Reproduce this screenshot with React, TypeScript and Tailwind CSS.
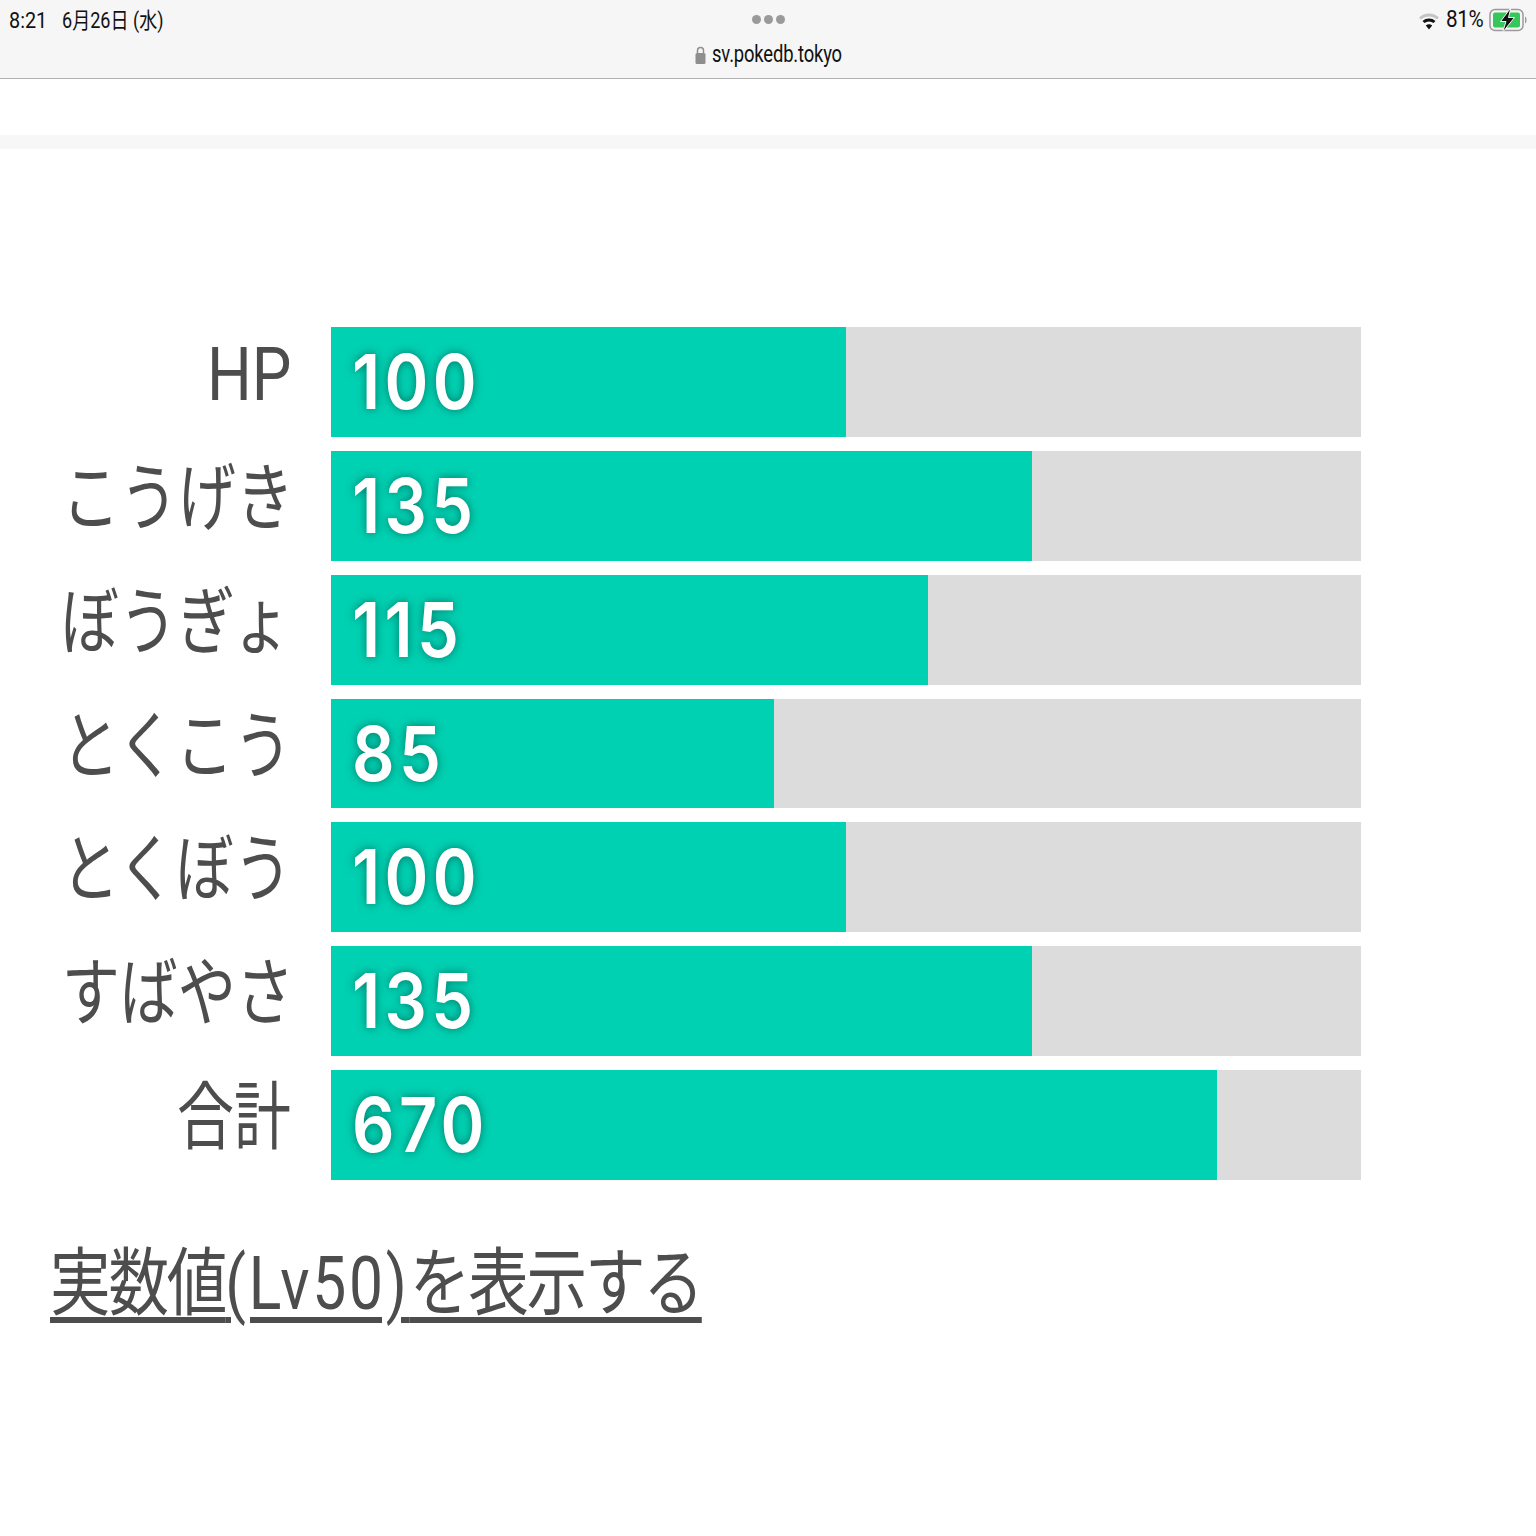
import React from 'react';

const stats = [
  { label: 'HP', value: 100, width: 515, squeeze: 'scale-x-[0.85]' },
  { label: 'こうげき', value: 135, width: 701, squeeze: 'scale-x-[0.785] -translate-x-[2px]' },
  { label: 'ぼうぎょ', value: 115, width: 597, squeeze: 'scale-x-[0.785] -translate-x-[2px]' },
  { label: 'とくこう', value: 85, width: 443, squeeze: 'scale-x-[0.785] -translate-x-[2px]' },
  { label: 'とくぼう', value: 100, width: 515, squeeze: 'scale-x-[0.785] -translate-x-[2px]' },
  { label: 'すばやさ', value: 135, width: 701, squeeze: 'scale-x-[0.785] -translate-x-[2px]' },
  { label: '合計', value: 670, width: 886, squeeze: 'scale-x-[0.77]' },
];

function Wifi() {
  return (
    <svg width="20" height="18" viewBox="0 0 20 18" className="mr-[5px] mt-[2px]">
      <path d="M1 6.5C6 1.8 14 1.8 19 6.5" fill="none" stroke="#c4c4c4" strokeWidth="3" />
      <path d="M4.5 10C7.6 7.2 12.4 7.2 15.5 10" fill="none" stroke="#111" strokeWidth="3" />
      <path d="M10 17.5L6.8 13.4C8.6 11.9 11.4 11.9 13.2 13.4Z" fill="#111" />
    </svg>
  );
}

function Battery() {
  return (
    <svg width="38" height="26" viewBox="0 0 38 26">
      <rect x="1" y="2.5" width="33" height="21" rx="5" fill="none" stroke="#9a9a9a" strokeWidth="1.5" />
      <rect x="4" y="5.5" width="27" height="15" rx="2" fill="#35c759" />
      <path d="M36 9.5C38 10 38 16 36 16.5Z" fill="#9a9a9a" />
      <path d="M22 0.5L11.5 14.5H17L13.5 25.5L25.5 10.5H19.5Z" fill="#111" stroke="#f6f6f6" strokeWidth="1" />
    </svg>
  );
}

export default function App() {
  return (
    <div className="h-[1536px] w-[1536px] overflow-hidden bg-white font-['Roboto','Noto_Sans_CJK_JP',sans-serif]">
      <header className="relative h-[79px] border-b border-[#b0b0b0] bg-[#f6f6f6] text-[#111]">
        <div className="flex items-start justify-between pl-[9px] pr-[9px] pt-[6px]">
          <div className="flex h-[28px] items-center gap-[15px] text-[22px]">
            <span className="inline-block origin-left scale-x-[0.9]">8:21</span>
            <span className="ml-[-4px] inline-block origin-left scale-x-[0.82]">6月26日 (水)</span>
          </div>
          <div className="flex h-[28px] items-center">
            <Wifi />
            <span className="mr-[4px] inline-block scale-x-[0.9] text-[23px] tracking-[-0.5px]">81%</span>
            <Battery />
          </div>
        </div>
        <div className="absolute left-[752px] top-[15px] flex gap-[3px]">
          <span className="size-[9px] rounded-full bg-[#9a9a9a]" />
          <span className="size-[9px] rounded-full bg-[#9a9a9a]" />
          <span className="size-[9px] rounded-full bg-[#9a9a9a]" />
        </div>
        <div className="absolute left-[695px] top-[41px] flex items-center gap-[6px]">
          <svg width="11" height="20" viewBox="0 0 11 20">
            <path d="M2.5 8V5.5a3 3 0 0 1 6 0V8" fill="none" stroke="#8e8e8e" strokeWidth="1.5" />
            <rect x="0.5" y="8" width="10" height="11" rx="1.5" fill="#8e8e8e" />
          </svg>
          <span className="inline-block origin-left scale-x-[0.8] text-[23px] leading-[28px] tracking-[-0.2px]">sv.pokedb.tokyo</span>
        </div>
      </header>

      <div className="mt-[56px] h-[14px] bg-[#f7f7f7]" />

      <main className="pt-[178.4px]">
        <div className="flex flex-col gap-[14px]">
          {stats.map((s) => (
            <div key={s.label} className="flex h-[109.75px] items-center">
              <div className="w-[291px] pb-[14px] text-right text-[74px] leading-none text-[#4d4d4d]">
                <span className={`inline-block origin-right whitespace-nowrap ${s.squeeze}`}>{s.label}</span>
              </div>
              <div className="ml-[40px] h-full w-[1030px] bg-[#dcdcdc]">
                <div
                  className="flex h-full items-center bg-[#00d1b2] pb-[2px] pl-[21px] font-['Inter','Roboto',sans-serif] text-[76px] font-semibold leading-none tracking-[5px] text-white [text-shadow:0_0_10px_rgba(0,80,70,0.7)]"
                  style={{ width: s.width }}
                >
                  <span className="inline-block origin-left scale-x-[0.875]">{s.value}</span>
                </div>
              </div>
            </div>
          ))}
        </div>
        <a className="ml-[50px] mt-[58px] block whitespace-nowrap text-[74px] leading-[92px] text-[#4d4d4d]">
          <span className="inline-block origin-left scale-x-[0.818] tracking-[-2.6px] underline decoration-[6px] underline-offset-[8px]">
            実数値<span className="tracking-[3.4px]">(Lv50)</span>を表示する
          </span>
        </a>
      </main>
    </div>
  );
}
